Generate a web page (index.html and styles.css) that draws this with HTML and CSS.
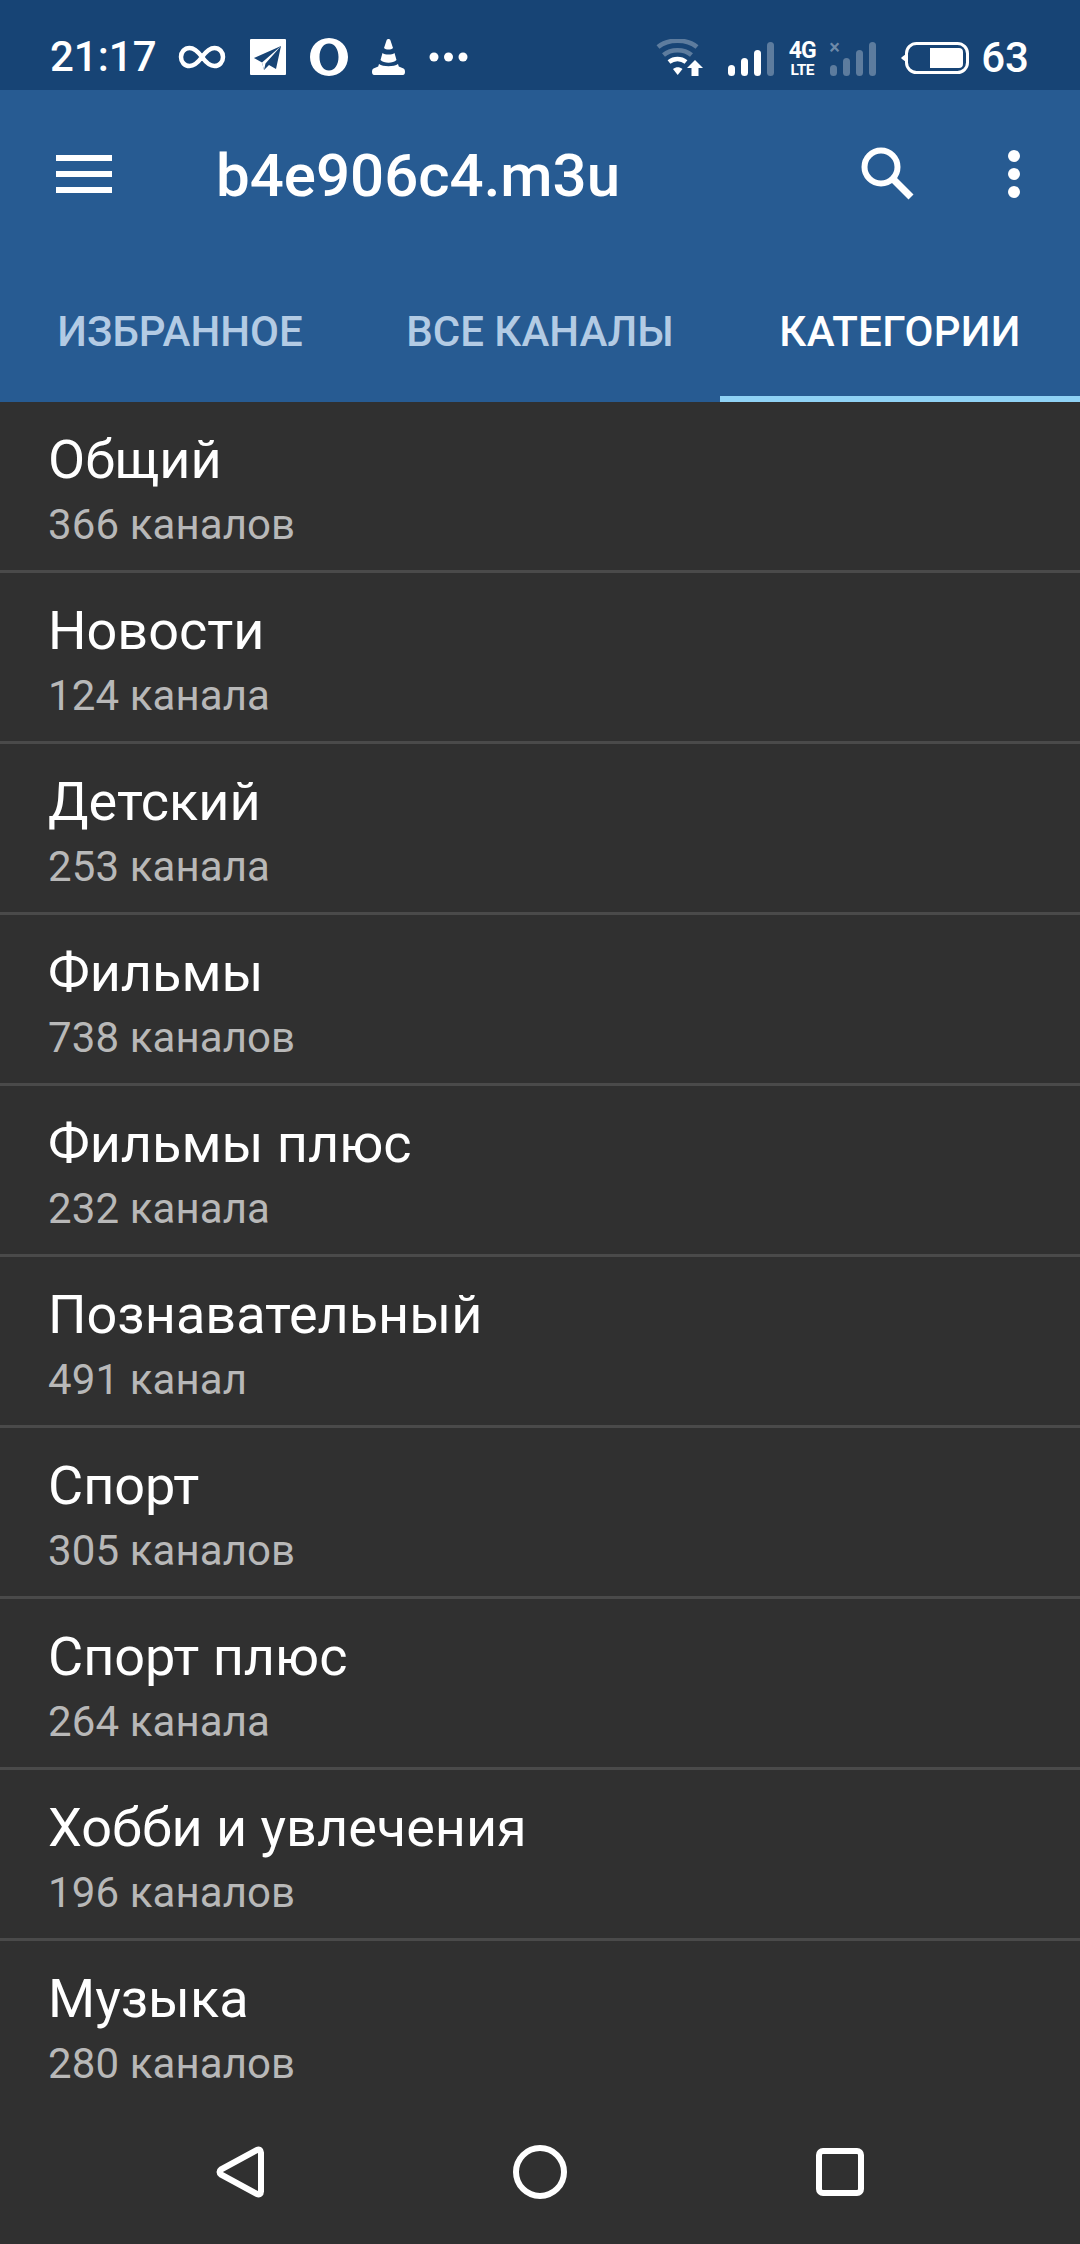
FILE: index.html
```html
<!doctype html>
<html>

<head>
    <meta charset="utf-8" />
    <title>b4e906c4.m3u</title>
    <link rel="stylesheet" href="styles.css">
</head>

<body>
    <div class="status-bar">
        <div class="status-group">
            <span class="status-text status-time">21:17</span>
            <svg width="48" height="24" viewBox="0 0 48 24"><path d="M24 12C20 6.500 16 3 11.500 3C6.500 3 3 7 3 12C3 17 6.500 21 11.500 21C16 21 20 17.500 24 12C28 6.500 32 3 36.500 3C41.500 3 45 7 45 12C45 17 41.500 21 36.500 21C32 21 28 17.500 24 12Z" fill="none" stroke="#fff" stroke-width="4.500"/></svg>
            <svg width="36" height="36" viewBox="0 0 36 36"><rect width="36" height="36" rx="1" fill="#fff"/><path d="M31 7L4 19L12 23.500L14 31L19 26L26 30Z" fill="#174475"/><path d="M31 7L12 23.500L14 31L15.500 24.500Z" fill="#fff"/></svg>
            <svg width="38" height="38" viewBox="0 0 38 38"><path fill-rule="evenodd" d="M19 0C30 0 38 8.500 38 19C38 29.500 30 38 19 38C8 38 0 29.500 0 19C0 8.500 8 0 19 0ZM19 5.500C13 5.500 9.500 11.500 9.500 19C9.500 26.500 13 32.500 19 32.500C25 32.500 28.500 26.500 28.500 19C28.500 11.500 25 5.500 19 5.500Z" fill="#fff"/></svg>
            <svg width="33" height="36" viewBox="0 0 33 36"><path d="M16.500 0C17.500 0 18.200 .5 18.500 1.500L21 9C19 11 14 11 12 9L14.500 1.500C14.800 .5 15.500 0 16.500 0Z" fill="#fff"/><path d="M10.500 14C13 16 20 16 22.500 14L24.500 21C21 24.500 12 24.500 8.500 21Z" fill="#fff"/><path d="M7 25C11 28 22 28 26 25L26.800 27.500L31.500 29.500C32.500 30 33 31 33 33C33 35 32 36 31 36H2C1 36 0 35 0 33C0 31 .5 30 1.500 29.500L6.200 27.500Z" fill="#fff"/></svg>
            <svg width="39" height="10" viewBox="0 0 39 10"><circle cx="5" cy="5" r="4.500" fill="#fff"/><circle cx="19.500" cy="5" r="4.500" fill="#fff"/><circle cx="34" cy="5" r="4.500" fill="#fff"/></svg>
        </div>
        <div class="status-group status-right">
            <svg class="wifi" width="47" height="37" viewBox="0 0 47 37">
                <path d="M2 8C12 -.5 31 -.5 41 8" fill="none" stroke="#fff" stroke-opacity=".3" stroke-width="4.500"/>
                <path d="M7.500 16C15 9.500 28 9.500 35.500 16" fill="none" stroke="#fff" stroke-opacity=".3" stroke-width="4.500"/>
                <path d="M13 23C18 19 25 19 30 23" fill="none" stroke="#fff" stroke-width="4.500"/>
                <path d="M17 30C20 27.500 23.500 27.500 26.500 30L21.700 36Z" fill="#fff"/>
                <path d="M39 21L47 29H42.500V37H35.500V29H31Z" fill="#fff"/>
            </svg>
            <div class="signal">
                <span class="bar bar-1"></span>
                <span class="bar bar-2"></span>
                <span class="bar bar-3"></span>
                <span class="bar bar-4 bar-off"></span>
            </div>
            <div class="net-type">
                <span class="net-4g">4G</span>
                <span class="net-lte">LTE</span>
            </div>
            <div class="signal signal-off">
                <span class="no-sim">×</span>
                <span class="bar bar-1 bar-off"></span>
                <span class="bar bar-2 bar-off"></span>
                <span class="bar bar-3 bar-off"></span>
                <span class="bar bar-4 bar-off"></span>
            </div>
            <svg class="battery" width="68" height="32" viewBox="0 0 68 32">
                <path d="M5 12L1 15C0 15.700 0 16.300 1 17L5 20Z" fill="#fff"/>
                <rect x="5.500" y="1.500" width="61" height="29" rx="10" fill="none" stroke="#fff" stroke-width="3"/>
                <path d="M29 6H58C60.500 6 62 7.500 62 10V22C62 24.500 60.500 26 58 26H29Z" fill="#fff"/>
            </svg>
            <span class="status-text battery-level">63</span>
        </div>
    </div>

    <div class="app-bar">
        <div class="toolbar">
            <svg class="menu-icon" width="56" height="38" viewBox="0 0 56 38"><path d="M0 0H56V6H0ZM0 16H56V22H0ZM0 32H56V38H0Z" fill="#fff"/></svg>
            <span class="toolbar-title">b4e906c4.m3u</span>
            <svg class="search-icon" width="54" height="54" viewBox="0 0 54 54"><circle cx="20" cy="20" r="16.500" fill="none" stroke="#fff" stroke-width="6"/><path d="M32 32L50 50" stroke="#fff" stroke-width="7"/></svg>
            <svg class="more-icon" width="12" height="48" viewBox="0 0 12 48"><circle cx="6" cy="6" r="6" fill="#fff"/><circle cx="6" cy="24" r="6" fill="#fff"/><circle cx="6" cy="42" r="6" fill="#fff"/></svg>
        </div>
        <div class="tabs">
            <div class="tab">Избранное</div>
            <div class="tab">Все каналы</div>
            <div class="tab tab-active">Категории</div>
        </div>
    </div>

    <div class="list">
        <div class="row"><div class="row-title">Общий</div><div class="row-sub">366 каналов</div></div>
        <div class="row"><div class="row-title">Новости</div><div class="row-sub">124 канала</div></div>
        <div class="row"><div class="row-title">Детский</div><div class="row-sub">253 канала</div></div>
        <div class="row"><div class="row-title">Фильмы</div><div class="row-sub">738 каналов</div></div>
        <div class="row"><div class="row-title">Фильмы плюс</div><div class="row-sub">232 канала</div></div>
        <div class="row"><div class="row-title">Познавательный</div><div class="row-sub">491 канал</div></div>
        <div class="row"><div class="row-title">Спорт</div><div class="row-sub">305 каналов</div></div>
        <div class="row"><div class="row-title">Спорт плюс</div><div class="row-sub">264 канала</div></div>
        <div class="row"><div class="row-title">Хобби и увлечения</div><div class="row-sub">196 каналов</div></div>
        <div class="row"><div class="row-title">Музыка</div><div class="row-sub">280 каналов</div></div>
    </div>

    <div class="nav-bar">
        <svg width="48" height="52" viewBox="0 0 48 52"><path d="M41 4C43 3 45 4 45 6.500V45.500C45 48 43 49 41 48L5 28.500C3 27 3 25 5 23.500Z" fill="none" stroke="#fff" stroke-width="6" stroke-linejoin="round"/></svg>
        <svg width="54" height="54" viewBox="0 0 54 54"><circle cx="27" cy="27" r="24" fill="none" stroke="#fff" stroke-width="6"/></svg>
        <svg width="48" height="48" viewBox="0 0 48 48"><rect x="3" y="3" width="42" height="42" rx="4" fill="none" stroke="#fff" stroke-width="6"/></svg>
    </div>
</body>

</html>
```

FILE: styles.css
```css
* {
    box-sizing: border-box;
}

html,
body {
    padding: 0;
    margin: 0;
    width: 1080px;
    height: 2244px;
    overflow: hidden;
    background: #303030;
    font-family: Roboto, sans-serif;
    color: #fff;
}

body {
    display: flex;
    flex-direction: column;
}

.status-bar {
    flex: none;
    height: 90px;
    padding: 38px 51px 0 50px;
    display: flex;
    justify-content: space-between;
    align-items: flex-start;
    background: #174475;
}

.status-group {
    display: flex;
    align-items: center;
    height: 38px;
    gap: 24px;
}

.status-text {
    font-size: 42px;
    line-height: 38px;
    font-weight: 500;
}

.status-time {
    margin-right: -3px;
}

.status-right {
    gap: 0;
}

.wifi {
    margin-right: 25px;
}

.signal {
    position: relative;
    display: flex;
    align-items: flex-end;
    gap: 6px;
    height: 34px;
    margin-top: 4px;
}

.signal-off {
    margin-right: 25px;
}

.bar {
    display: block;
    width: 7px;
    border-radius: 4px;
    background: #fff;
}

.bar-1 {
    height: 11px;
}

.bar-2 {
    height: 18px;
}

.bar-3 {
    height: 26px;
}

.bar-4 {
    height: 34px;
}

.bar-off {
    background: rgba(255, 255, 255, .3);
}

.no-sim {
    position: absolute;
    left: -1px;
    top: -5px;
    font-size: 20px;
    line-height: 20px;
    font-weight: 500;
    color: rgba(255, 255, 255, .4);
}

.net-type {
    display: flex;
    flex-direction: column;
    align-items: center;
    width: 24px;
    margin: 4px 16px 0;
    font-weight: 700;
}

.net-4g {
    font-size: 23px;
    line-height: 20px;
    letter-spacing: -1px;
}

.net-lte {
    font-size: 15.500px;
    line-height: 15px;
    margin-top: 2px;
    letter-spacing: -.5px;
}

.battery {
    margin-right: 12px;
    margin-top: 2px;
}

.battery-level {
    margin-top: 2px;
}

.app-bar {
    flex: none;
    background: #275b92;
}

.toolbar {
    height: 168px;
    display: flex;
    align-items: center;
    padding-left: 56px;
    padding-right: 60px;
}

.menu-icon {
    margin-right: 104px;
}

.toolbar-title {
    flex: 1;
    font-size: 60px;
    font-weight: 500;
    padding-top: 3px;
}

.search-icon {
    margin-right: 93px;
}

.tabs {
    display: flex;
    height: 144px;
}

.tab {
    flex: 1;
    display: flex;
    align-items: center;
    justify-content: center;
    font-size: 42px;
    font-weight: 500;
    text-transform: uppercase;
    color: #b3cbe4;
    border-bottom: 6px solid transparent;
    padding-top: 8px;
}

.tab-active {
    color: #fff;
    border-bottom-color: #8fd2f5;
    letter-spacing: .3px;
}

.list {
    flex: 1;
    min-height: 0;
    overflow: hidden;
}

.row {
    height: 171px;
    padding: 25px 48px 0;
    border-bottom: 3px solid #4a4a4a;
}

.row:last-child {
    border-bottom: none;
}

.row-title {
    font-size: 54px;
    line-height: 66px;
}

.row-sub {
    font-size: 42px;
    line-height: 54px;
    margin-top: 5px;
    letter-spacing: .1px;
    color: #b8b8b8;
}

.nav-bar {
    flex: none;
    height: 132px;
    display: flex;
    align-items: center;
    justify-content: space-between;
    padding: 0 216px 12px 216px;
    background: #303030;
}
```
